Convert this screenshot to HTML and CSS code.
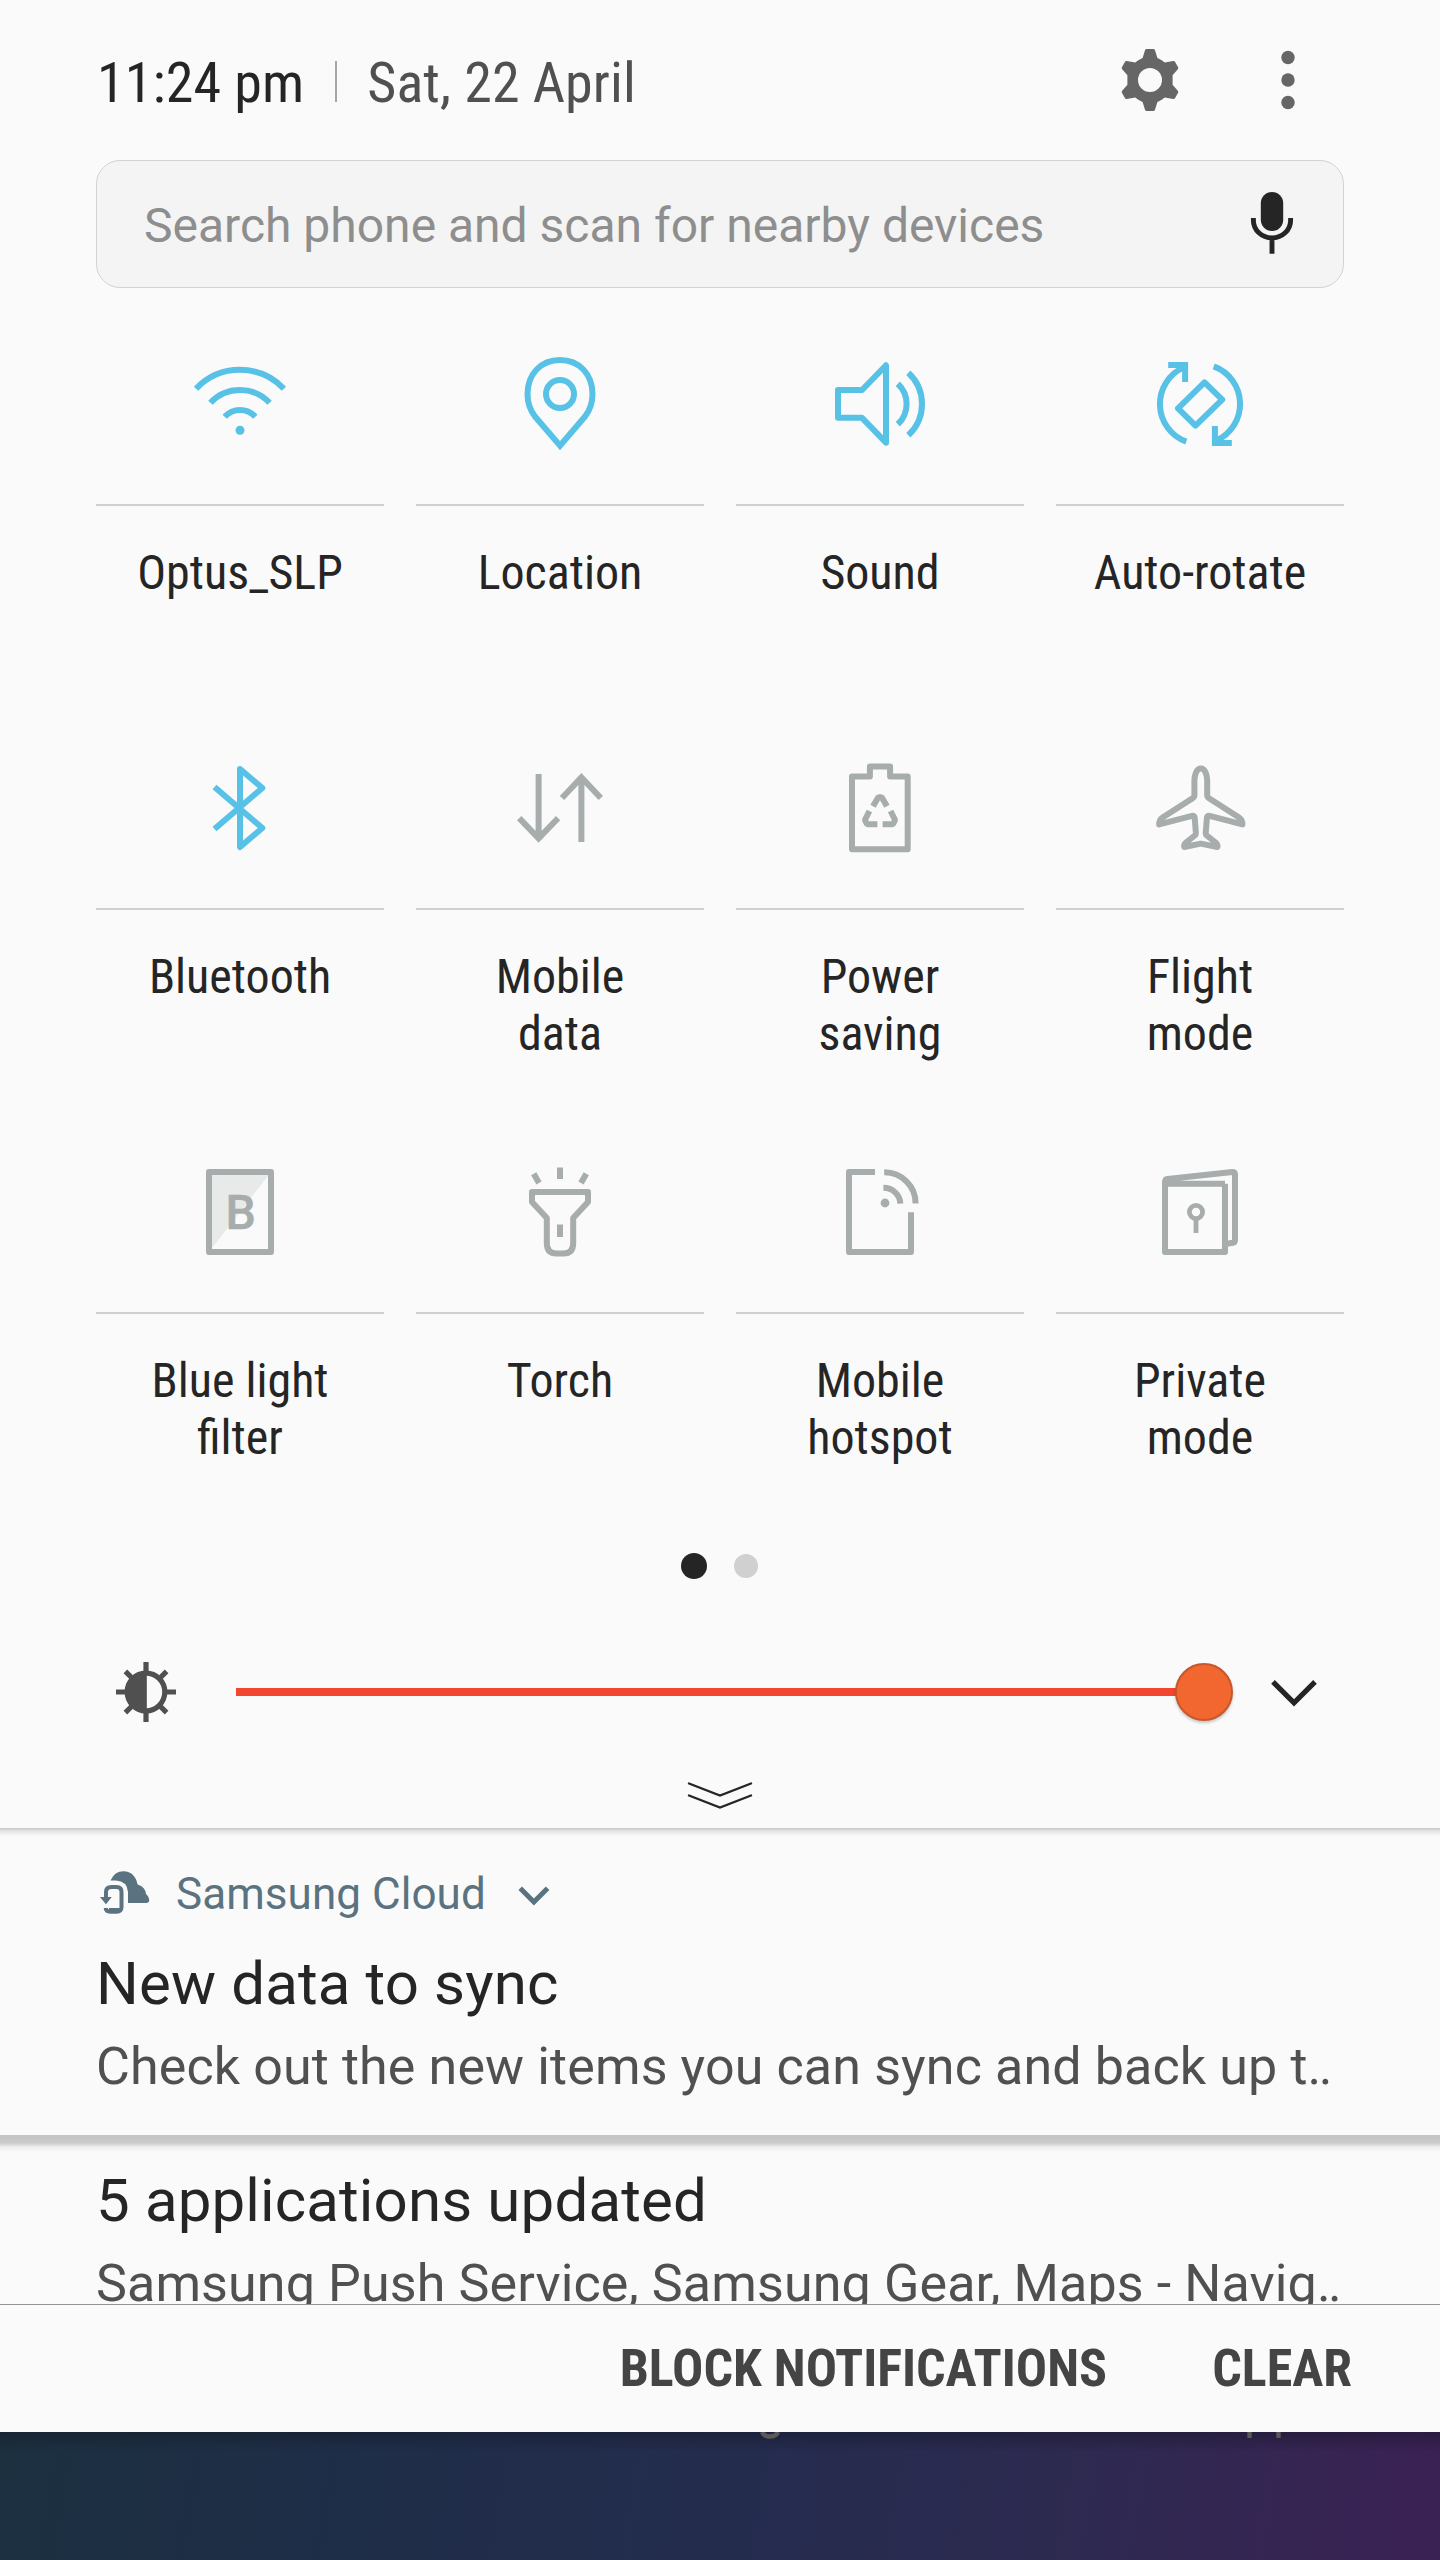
FILE: index.html
```html
<!DOCTYPE html>
<html lang="en">
<head>
<meta charset="utf-8">
<title>Quick settings</title>
<link rel="stylesheet" href="styles.css">
</head>
<body>
<main class="shade">
  <section class="panel">
    <header class="status">
      <div class="clock">
        <span class="time">11:24 pm</span>
        <span class="divider"></span>
        <span class="date">Sat, 22 April</span>
      </div>
      <svg class="gear" viewBox="0 0 64 64"><path fill-rule="evenodd" d="M28.6 1H35.4Q36.6 1 37 2.2L39.4 10Q43.5 11.6 46.8 14.4L55.2 13Q56.5 12.8 57.1 13.9L60.1 19.2Q60.6 20.3 59.8 21.3L54.6 27.3V36.7L59.8 42.7Q60.6 43.7 60.1 44.8L57.1 50.1Q56.5 51.2 55.2 51L46.8 49.6Q43.5 52.4 39.4 54L37 61.8Q36.6 63 35.4 63H28.6Q27.4 63 27 61.8L24.6 54Q20.5 52.4 17.2 49.6L8.8 51Q7.5 51.2 6.9 50.1L3.9 44.8Q3.4 43.7 4.2 42.7L9.4 36.7V27.3L4.2 21.3Q3.4 20.3 3.9 19.2L6.9 13.9Q7.5 12.8 8.8 13L17.2 14.4Q20.5 11.6 24.6 10L27 2.2Q27.4 1 28.6 1ZM32 20A12 12 0 1 0 32 44A12 12 0 1 0 32 20Z"/></svg>
      <svg class="more" viewBox="0 0 16 60"><circle cx="8" cy="7.5" r="6.7"/><circle cx="8" cy="30" r="6.7"/><circle cx="8" cy="52.5" r="6.7"/></svg>
    </header>

    <div class="search">
      <span class="search-text">Search phone and scan for nearby devices</span>
      <svg class="mic" viewBox="0 0 44 64"><rect x="10.8" y="1" width="22.4" height="39" rx="11.2" fill="#252525"/><path d="M3.4 27V29.5A18.6 17.4 0 0 0 40.6 29.5V27M22 47V62.7" fill="none" stroke="#252525" stroke-width="4.9"/></svg>
    </div>

    <div class="tiles">
      <div class="tile on">
        <svg class="icon" viewBox="0 0 96 96"><path d="M4.1 32.7A60.6 60.6 0 0 1 91.9 32.7M18.4 46.8A40.6 40.6 0 0 1 77.6 46.8M32.7 60.8A20.6 20.6 0 0 1 63.3 60.8"/><circle class="solid" cx="48" cy="74.3" r="4.5"/></svg>
        <div class="label">Optus_SLP</div>
      </div>
      <div class="tile on">
        <svg class="icon" viewBox="0 0 96 96"><path d="M48 89.6L23 60.5C18 54 15.5 46 15.5 38C15.5 18 29 4 48 4C67 4 80.5 18 80.5 38C80.5 46 78 54 73 60.5Z"/><circle cx="48" cy="38" r="14"/></svg>
        <div class="label">Location</div>
      </div>
      <div class="tile on">
        <svg class="icon" viewBox="0 0 96 96"><path class="round" d="M6 34H30L54 9.3V86.7L30 61.8H6Z"/><path d="M65.8 27.7A27.8 27.8 0 0 1 65.8 68.3M76.3 16.7A42.6 42.6 0 0 1 76.3 79.3"/></svg>
        <div class="label">Sound</div>
      </div>
      <div class="tile on">
        <svg class="icon" viewBox="0 0 96 96"><path d="M32 11.3A40 40 0 0 0 34.3 85.6M61.7 10.4A40 40 0 0 1 64 84.7M16.2 8.9H33.1V26M79.8 87.1H62.9V70"/><path class="round" d="M52.5 26.3L70.2 43.7L43.5 69.7L26 52.3Z"/></svg>
        <div class="label">Auto-rotate</div>
      </div>

      <div class="tile on">
        <svg class="icon" viewBox="0 0 96 96"><path class="round" d="M22.5 27L70.3 68L48 87V9L70.3 28L22.5 69"/></svg>
        <div class="label">Bluetooth</div>
      </div>
      <div class="tile">
        <svg class="icon" viewBox="0 0 96 96"><path d="M26.6 14V78M7.2 58.2L26.6 78.4L46.1 58.2M69.4 82V18M50 38L69.4 17.4L88.8 38"/></svg>
        <div class="label">Mobile<br>data</div>
      </div>
      <div class="tile">
        <svg class="icon" viewBox="0 0 96 96"><path class="round" d="M20 16.6H37.9V6.6H58.1V16.6H75.7V89.2H20Z"/><path class="bevel" d="M41 46.3L46.3 37.2H49.7L55 46.3M37.4 51L32.9 60L35 64.3H45.4M58.6 51L63.1 60L61 64.3H50.6"/></svg>
        <div class="label">Power<br>saving</div>
      </div>
      <div class="tile">
        <svg class="icon" viewBox="0 0 96 96"><path class="round" d="M48.8 8.5C44.5 8.5 42.4 15 42.4 21V35Q42.4 37 40.6 38.2L11 57.2Q7 60 7.2 64.4L40 55.9Q42.6 55.5 42.7 58L43.9 73Q44 74.5 42.8 75.5L34 82.5Q31.7 84.6 32.2 87L48.8 83.6L65.4 87Q65.9 84.6 63.6 82.5L54.8 75.5Q53.6 74.5 53.7 73L54.9 58Q55 55.5 57.6 55.9L90.4 64.4Q90.6 60 86.6 57.2L57 38.2Q55.2 37 55.2 35V21C55.2 15 53.1 8.5 48.8 8.5Z"/></svg>
        <div class="label">Flight<br>mode</div>
      </div>

      <div class="tile">
        <svg class="icon" viewBox="0 0 96 96"><path class="shadehalf" d="M17 8H79L17 88Z"/><rect class="round" x="17" y="8" width="62" height="80"/><text class="letter" x="33.6" y="65.2">B</text></svg>
        <div class="label">Blue light<br>filter</div>
      </div>
      <div class="tile">
        <svg class="icon" viewBox="0 0 96 96"><path d="M48 3.4V15M21.7 9.8L27 19M74.3 9.8L69 19M48 60.4V73"/><path class="round" d="M20 28H76V38L61.2 54V79Q61.2 89.5 51.5 89.5H44.5Q34.8 89.5 34.8 79V54L20 38Z"/></svg>
        <div class="label">Torch</div>
      </div>
      <div class="tile">
        <svg class="icon" viewBox="0 0 96 96"><path class="round" d="M43 8H17V88H79V48.2"/><path d="M52.2 8.2A31.2 31.2 0 0 1 83.6 39.6M51.4 23.8A16.8 16.2 0 0 1 68.3 39.6"/><circle class="solid" cx="53" cy="39" r="4.4"/></svg>
        <div class="label">Mobile<br>hotspot</div>
      </div>
      <div class="tile">
        <svg class="icon" viewBox="0 0 96 96"><path class="round" d="M73 19.8H13V88H73V19.8M13 20V18Q13 15.2 15.6 14.9L80.4 8.1Q83 7.9 83 10.4V76.2Q83 78.4 80.8 78.8L75 79.8"/><g class="thin"><circle cx="44" cy="48" r="6.6"/><path d="M44 55V69"/></g></svg>
        <div class="label">Private<br>mode</div>
      </div>
    </div>

    <div class="pages"><span class="page current"></span><span class="page"></span></div>

    <div class="brightness">
      <svg class="sun" viewBox="0 0 60 60"><g fill="none" stroke="#505050" stroke-width="5.2"><circle cx="30" cy="30" r="18.8"/><path d="M30 0V10M30 50V60M0 30H10M50 30H60M9.4 9.4L17 17M43 43L50.6 50.6M50.6 9.4L43 17M17 43L9.4 50.6"/></g><path d="M30.8 11A19 19 0 0 0 30.8 49Z" fill="#505050"/></svg>
      <div class="track"><span class="thumb"></span></div>
      <svg class="expand" viewBox="0 0 48 30"><path d="M3 3.8L24 24.8L45 3.8" fill="none" stroke="#252525" stroke-width="5.2"/></svg>
    </div>

    <svg class="handle" viewBox="0 0 68 30"><path d="M3 3.5L34 15.5L65 3.5M3 15.5L34 27.5L65 15.5" fill="none" stroke="#252525" stroke-width="2.4" stroke-linecap="round"/></svg>
  </section>

  <article class="note first">
    <div class="app">
      <svg class="cloud" viewBox="0 0 50 44"><path d="M10.5 10.5Q14.5 1.3 23.5 1.3Q35 1.8 37.6 14.5Q45.5 17 46 24Q49.4 27 49.2 31Q48.5 33 45 33H28V22Q27 11 16 10.5Z" fill="#5b7380"/><path d="M6 29V22Q6 17 11.5 17H16.5Q21.5 17 21.5 22V37Q21.5 41.7 16.5 41.7H10.5Q5.7 41.7 5.7 38" fill="none" stroke="#5b7380" stroke-width="4"/><path d="M0 27H11.8L5.9 34.3ZM9 38H20V42H9Z" fill="#5b7380"/></svg>
      <span>Samsung Cloud</span>
      <svg class="caret" viewBox="0 0 34 24"><path d="M3.2 3.2L16.9 17L30.6 3.2" fill="none" stroke="#5b7380" stroke-width="5"/></svg>
    </div>
    <h2 class="title">New data to sync</h2>
    <p class="text">Check out the new items you can sync and back up t<span class="dots">..</span></p>
  </article>

  <article class="note second">
    <h2 class="title">5 applications updated</h2>
    <p class="text">Samsung Push Service, Samsung Gear, Maps - Navig<span class="dots">..</span></p>
  </article>

  <footer class="actions"><span>BLOCK NOTIFICATIONS</span><span>CLEAR</span></footer>
</main>
<div class="wallpaper">
  <svg class="peek" viewBox="0 0 524 7"><path d="M2 0Q4 4.5 10 4.5T18 0M489.5 0V6M518.5 0V6" fill="none" stroke="#5a5858" stroke-width="4.4"/></svg>
</div>
</body>
</html>
```
FILE: styles.css
```css
* { box-sizing: border-box; }

body {
  margin: 0;
  width: 1440px;
  height: 2560px;
  overflow: hidden;
  display: flex;
  flex-direction: column;
  background: #fafafa;
  color: #252525;
  font-family: Roboto, "Liberation Sans", sans-serif;
}

svg { display: block; flex: none; }

.shade { height: 2432px; display: flex; flex-direction: column; }

/* Quick settings panel */
.panel { height: 1828px; padding: 0 96px; display: flex; flex-direction: column; }

.status { height: 160px; display: flex; align-items: center; }
.clock {
  flex: 1;
  display: flex;
  align-items: center;
  padding-top: 6px;
  font: 400 56px/66px "Roboto Condensed", Roboto, sans-serif;
  letter-spacing: .12px;
  white-space: nowrap;
}
.time { padding-left: 1px; }
.divider { width: 2px; height: 41px; margin: 0 30px 3px 31px; background: #a6a6a6; }
.date { color: #505050; }
.gear { width: 64px; height: 64px; fill: #666; margin-right: 98px; }
.more { width: 16px; height: 60px; fill: #666; margin-right: 48px; }

.search {
  height: 128px;
  padding: 0 49px 0 47px;
  display: flex;
  align-items: center;
  justify-content: space-between;
  background: #f4f4f4;
  border: 1px solid #d2d2d2;
  border-radius: 24px;
}
.search-text { font-size: 48px; line-height: 58px; padding-top: 3px; color: #8e8e8e; white-space: nowrap; }
.mic { width: 44px; height: 64px; margin-bottom: 2px; }

.tiles {
  margin-top: 68px;
  display: grid;
  grid-template-columns: repeat(4, 288px);
  grid-template-rows: 404px 404px 389px;
  column-gap: 32px;
}
.tile { display: flex; flex-direction: column; align-items: center; color: #a6adac; }
.tile.on { color: #58c1e6; }
.icon { width: 96px; height: 96px; fill: none; stroke: currentColor; stroke-width: 6; }
.icon .round { stroke-linejoin: round; }
.icon .bevel { stroke-linejoin: bevel; }
.icon .solid { fill: currentColor; stroke: none; }
.icon .shadehalf { fill: #e8eae9; stroke: none; }
.icon .letter { fill: currentColor; stroke: currentColor; stroke-width: .5; font: 500 48px Roboto, sans-serif; }
.icon .thin { stroke-width: 4.8; }
.label {
  width: 100%;
  margin-top: 52px;
  padding-top: 38px;
  border-top: 2px solid #d0d0d0;
  color: #252525;
  text-align: center;
  font: 400 48px/57px "Roboto Condensed", Roboto, sans-serif;
}

.pages { display: flex; align-items: center; justify-content: center; gap: 27px; height: 26px; padding-right: 1px; }
.page { width: 24px; height: 24px; border-radius: 50%; background: #d0d0d0; }
.page.current { width: 26px; height: 26px; background: #252525; }

.brightness { margin-top: 83px; height: 60px; padding-left: 20px; display: flex; align-items: center; }
.sun { width: 60px; height: 60px; }
.track {
  width: 997px;
  height: 8px;
  margin-left: 60px;
  display: flex;
  align-items: center;
  justify-content: flex-end;
  background: linear-gradient(to right, #f24631 960px, transparent 960px);
}
.thumb {
  width: 58px;
  height: 58px;
  flex: none;
  border-radius: 50%;
  background: #f2662f;
  border: 2px solid #c8572a;
  box-shadow: 0 2px 3px rgba(0, 0, 0, .22);
}
.expand { width: 48px; height: 30px; margin: 2px 0 0 37px; }
.handle { width: 68px; height: 30px; margin: 58px auto 0; }

/* Notifications */
.note { padding: 0 96px; white-space: nowrap; }
.note.first {
  height: 307px;
  padding-top: 40px;
  background: linear-gradient(#c6c6c6, #e4e4e4 3px, #fafafa 8px);
}
.app {
  height: 52px;
  display: flex;
  align-items: center;
  font-size: 44px;
  line-height: 52px;
  letter-spacing: .06px;
  color: #5b7380;
}
.cloud { width: 50px; height: 44px; margin: 0 26px 4px 4px; }
.caret { width: 34px; height: 24px; margin: 6px 0 0 31px; }
.title { margin: 29px 0 0; font-size: 60px; line-height: 70px; font-weight: 400; letter-spacing: .14px; }
.text { margin: 18px 0 0; font-size: 52px; line-height: 60px; letter-spacing: .12px; color: #505050; }
.dots { letter-spacing: -2.6px; }
.note.second {
  height: 169px;
  overflow: hidden;
  background: linear-gradient(#c4c4c4, #cbcbcb 8px, #eee 12px, #fafafa 17px);
}
.note.second .title { margin-top: 31px; }
.note.second .text { margin-top: 18px; }

.actions {
  height: 128px;
  padding-right: 88px;
  display: flex;
  align-items: center;
  justify-content: flex-end;
  gap: 105px;
  border-top: 1px solid #949494;
  font: 700 52px/61px "Roboto Condensed", Roboto, sans-serif;
  color: #444;
}

.wallpaper {
  height: 128px;
  padding-left: 760px;
  background:
    linear-gradient(rgba(10, 12, 20, .3), transparent 20px),
    linear-gradient(100deg, #1c3040 0%, #1f2d49 28%, #242c4e 52%, #2e2950 76%, #3b2154 100%);
}
.peek { width: 524px; height: 7px; }
```
